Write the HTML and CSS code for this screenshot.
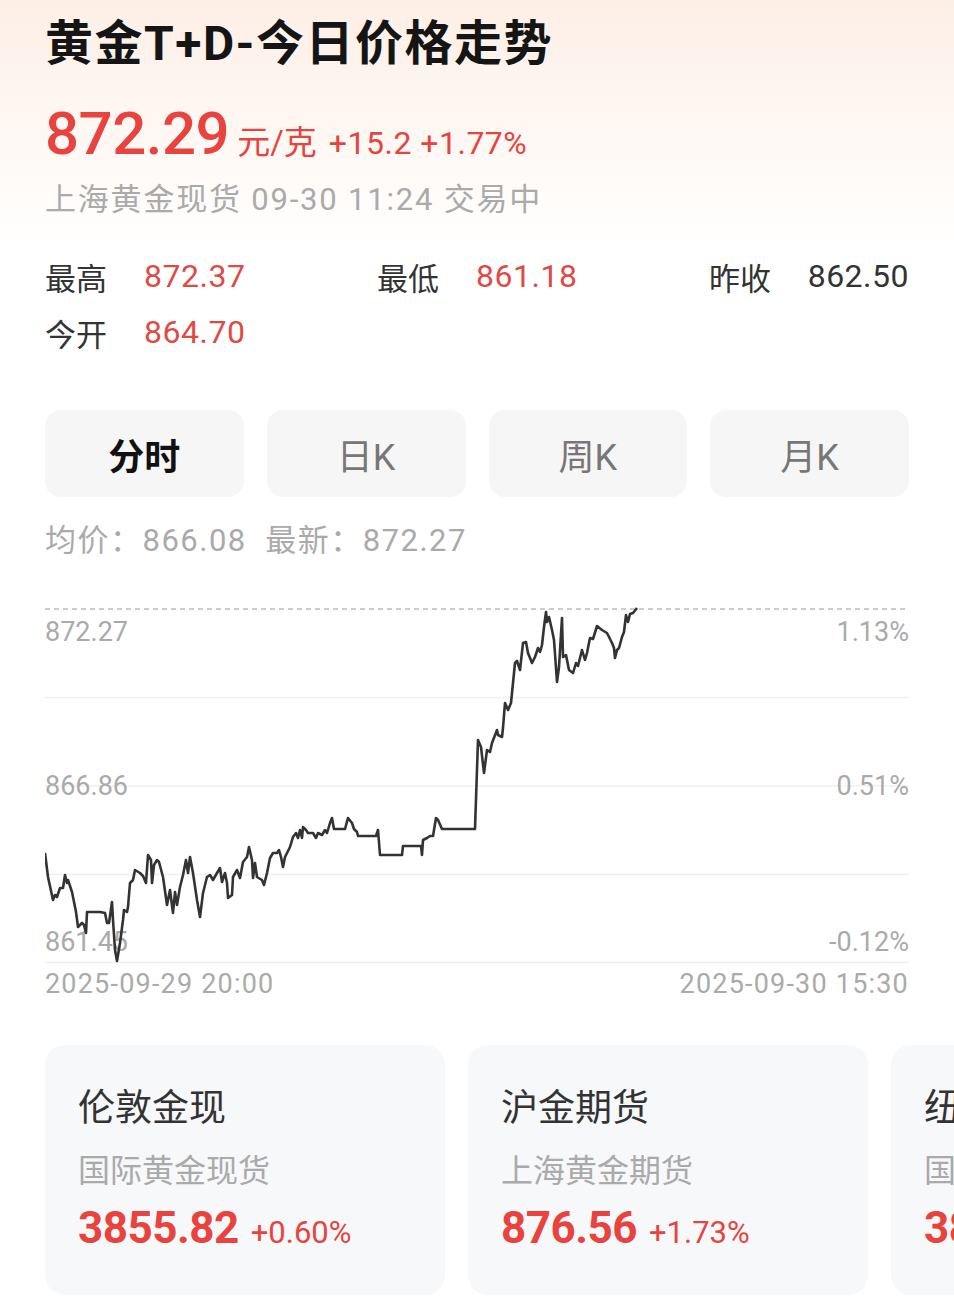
FILE: index.html
```html
<!DOCTYPE html>
<html lang="zh-CN">
<head>
    <meta charset="UTF-8">
    <meta name="viewport" content="width=device-width, initial-scale=1.0">
    <title>黄金T+D-今日价格走势</title>
    <link rel="stylesheet" href="styles.css">
</head>
<body>
    <div class="mainContainerCls">
        <h1 class="titleCls">黄金T+D-今日价格走势</h1>
        <div class="priceRowCls">
            <span class="priceCls">872.29</span>
            <span class="unitCls">元/克</span>
            <span class="changeCls">+15.2 +1.77%</span>
        </div>
        <div class="subInfoCls">上海黄金现货 09-30 11:24 交易中</div>

        <div class="statsGridCls">
            <div class="statCls"><span class="statLabelCls">最高</span><span class="statValueCls">872.37</span></div>
            <div class="statCls"><span class="statLabelCls">最低</span><span class="statValueCls">861.18</span></div>
            <div class="statCls"><span class="statLabelCls">昨收</span><span class="statValueCls darkCls">862.50</span></div>
            <div class="statCls"><span class="statLabelCls">今开</span><span class="statValueCls">864.70</span></div>
        </div>

        <div class="tabRowCls">
            <div class="tabCls activeTabCls">分时</div>
            <div class="tabCls">日K</div>
            <div class="tabCls">周K</div>
            <div class="tabCls">月K</div>
        </div>

        <div class="avgLineCls">均价：866.08&nbsp;&nbsp;最新：872.27</div>

        <div class="chartCls">
            <svg width="864" height="405" viewBox="45 561 864 405">
                <!-- grid -->
                <line x1="45" y1="609" x2="909" y2="609" class="dashCls"/>
                <line x1="45" y1="697.5" x2="909" y2="697.5" class="gridCls"/>
                <line x1="45" y1="786" x2="909" y2="786" class="gridCls"/>
                <line x1="45" y1="874.5" x2="909" y2="874.5" class="gridCls"/>
                <line x1="45" y1="962.5" x2="909" y2="962.5" class="gridCls"/>

                <text x="45" y="632" class="axisCls">872.27</text>
                <text x="45" y="786" class="axisCls">866.86</text>
                <text x="45" y="942" class="axisCls">861.45</text>
                <text x="909" y="632" class="axisCls" text-anchor="end">1.13%</text>
                <text x="909" y="786" class="axisCls" text-anchor="end">0.51%</text>
                <text x="909" y="942" class="axisCls" text-anchor="end">-0.12%</text>

                <polyline class="priceLineCls" points="45,853 48,877 53,900 55,895 57,897 60,888 63,888 65,875 67,883 68,880 72,892 76,912 78,927 82,923 84,925 86,933 87,912 100,912 105,913 107,923 109,923 112,902 113,920 115,950 117,961 120,943 123,920 124,910 127,912 128,907 130,883 133,880 135,870 140,873 143,876 146,883 148,855 151,860 152,883 154,865 157,860 159,862 163,877 167,905 170,890 173,913 175,892 177,905 180,887 183,875 186,860 188,873 190,857 193,873 197,900 200,917 203,893 207,877 210,875 213,880 217,873 220,868 222,882 225,873 227,883 228,898 232,895 233,877 237,870 240,878 243,862 247,857 249,847 252,860 253,878 255,863 257,877 262,880 264,885 267,873 270,858 273,853 277,853 279,850 281,857 283,867 285,857 287,853 290,847 293,837 296,833 298,838 300,830 302,838 303,827 306,830 308,833 313,833 316,838 318,833 322,835 325,830 327,833 330,823 332,818 334,829 345,829 348,818 352,823 354,829 357,832 358,836 376,836 378,830 380,855 402,855 403,846 421,846 422,855 423,840 427,838 430,836 433,836 436,818 438,820 442,829 475,829 478,740 481,747 484,773 487,750 490,752 492,743 497,730 498,735 502,737 503,728 505,703 508,710 511,703 513,683 515,663 517,661 520,670 523,643 526,642 528,653 532,663 535,657 538,648 540,652 542,645 544,627 546,612 547,622 549,617 552,630 554,640 557,682 559,667 562,618 563,657 566,655 569,670 573,673 576,663 578,666 582,650 585,660 587,653 590,638 593,639 597,626 602,630 607,633 612,643 614,648 615,658 617,650 619,648 622,637 624,632 626,615 628,622 630,614 633,613 637,608"/>
            </svg>
        </div>
        <div class="dateRowCls">
            <span>2025-09-29 20:00</span>
            <span>2025-09-30 15:30</span>
        </div>
    </div>

    <div class="cardRowCls">
        <div class="cardCls">
            <div class="cardTitleCls">伦敦金现</div>
            <div class="cardSubCls">国际黄金现货</div>
            <div class="cardPriceCls"><span class="cardValueCls">3855.82</span><span class="cardPctCls">+0.60%</span></div>
        </div>
        <div class="cardCls">
            <div class="cardTitleCls">沪金期货</div>
            <div class="cardSubCls">上海黄金期货</div>
            <div class="cardPriceCls"><span class="cardValueCls">876.56</span><span class="cardPctCls">+1.73%</span></div>
        </div>
        <div class="cardCls">
            <div class="cardTitleCls">纽约金</div>
            <div class="cardSubCls">国际黄金期货</div>
            <div class="cardPriceCls"><span class="cardValueCls">3880.10</span><span class="cardPctCls">+0.55%</span></div>
        </div>
    </div>
</body>
</html>
```

FILE: styles.css
```css
*{margin:0;padding:0;box-sizing:border-box;}
body{width:954px;height:1301px;overflow:hidden;font-family:Roboto,"Noto Sans CJK SC",sans-serif;color:#222;background:linear-gradient(to bottom,#fdefe6 0px,#fef7f2 120px,#ffffff 250px,#ffffff 100%);}
.mainContainerCls{padding:14px 45px 0 45px;}
.titleCls{font-size:48px;line-height:60px;font-weight:700;color:#151515;letter-spacing:1.5px;}
.priceRowCls{display:flex;align-items:baseline;margin-top:24px;height:72px;color:#e8433e;}
.priceCls{font-size:60px;line-height:72px;font-weight:500;letter-spacing:-0.5px;}
.unitCls{font-size:33px;margin-left:8px;}
.changeCls{font-size:32px;margin-left:12px;letter-spacing:0.5px;}
.subInfoCls{font-size:31px;line-height:40px;color:#aaa;margin-top:10px;letter-spacing:1.8px;}
.statsGridCls{display:grid;grid-template-columns:332px 332px 200px;margin-top:28px;}
.statCls{display:flex;align-items:center;height:56px;font-size:31px;}
.statLabelCls{width:99px;color:#333;}
.statValueCls{color:#df4a45;font-size:32px;letter-spacing:0.5px;}
.darkCls{color:#333;}
.tabRowCls{display:flex;gap:23px;margin-top:50px;}
.tabCls{flex:1;height:87px;border-radius:16px;background:#f6f6f6;display:flex;justify-content:center;align-items:center;font-size:36px;color:#777;}
.activeTabCls{color:#111;font-weight:700;}
.avgLineCls{font-size:31px;line-height:40px;color:#aaa;margin-top:24px;letter-spacing:1.5px;}
.chartCls{height:405px;}
.chartCls svg{display:block;}
.dashCls{stroke:#bbb;stroke-width:1.5;stroke-dasharray:5 4;}
.gridCls{stroke:#f0f0f0;stroke-width:1.5;}
.axisCls{font-family:Roboto,sans-serif;font-size:27px;fill:#aaa;dominant-baseline:central;}
.priceLineCls{fill:none;stroke:#333;stroke-width:2.6;stroke-linejoin:round;}
.dateRowCls{display:flex;justify-content:space-between;font-size:27px;line-height:36px;color:#aaa;letter-spacing:1.2px;}
.cardRowCls{display:flex;gap:23px;padding-left:45px;margin-top:43px;overflow:hidden;}
.cardCls{flex:0 0 400px;height:250px;border-radius:20px;background:#f7f8fa;padding:39px 33px 0 33px;}
.cardTitleCls{font-size:37px;line-height:50px;color:#333;}
.cardSubCls{font-size:32px;line-height:46px;color:#aaa;margin-top:14px;}
.cardPriceCls{display:flex;align-items:baseline;color:#e8433e;margin-top:6px;}
.cardValueCls{font-size:44px;line-height:56px;font-weight:700;letter-spacing:-0.5px;}
.cardPctCls{font-size:31px;margin-left:12px;}
```
